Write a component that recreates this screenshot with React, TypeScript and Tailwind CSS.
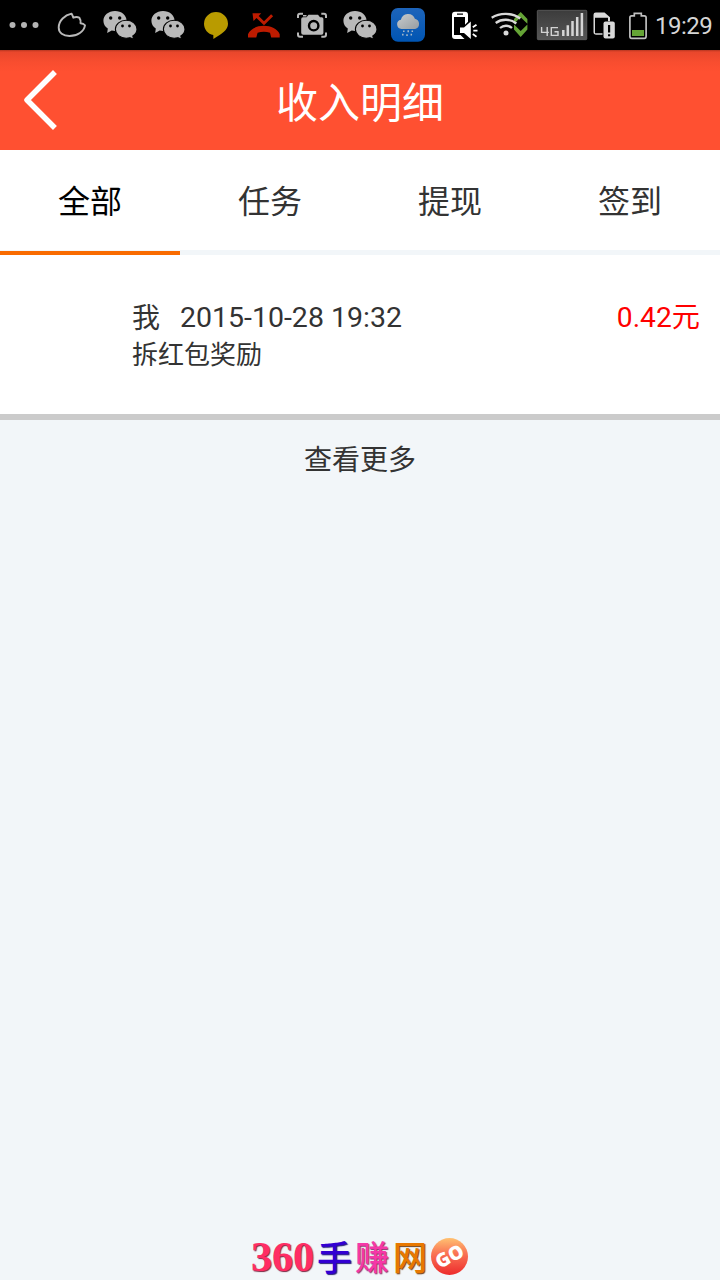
import type { ReactNode } from 'react';

const gray = '#b9b9b9';

function Slot({ children }: { children: ReactNode }) {
  return (
    <svg className="h-[50px] w-12 shrink-0" viewBox="0 0 48 50" fill="none">
      {children}
    </svg>
  );
}

function WeChat() {
  return (
    <Slot>
      <path d="M19 11c-6.5 0-11.6 4.3-11.6 9.8 0 3.2 1.6 6 4.4 7.8L11.2 33l4.5-2.5c1.1.3 2.2.4 3.3.4 6.4 0 11.6-4.5 11.6-10.1S25.4 11 19 11z" fill={gray} />
      <path d="M30.2 20.300c-6 0-10.800 4-10.800 9 0 5 4.800 8.900 10.800 8.900 1.300 0 2.400-.2 3.600-.5l3.800 1.500-.8-3.200c2.500-1.600 4.200-4 4.200-6.700 0-5-4.800-9-10.800-9z" fill={gray} stroke="#000" strokeWidth="1.100" />
      <circle cx="14.700" cy="18" r="1.700" fill="#000" />
      <circle cx="23.700" cy="18" r="1.700" fill="#000" />
      <circle cx="26.500" cy="26" r="1.400" fill="#000" />
      <circle cx="33.500" cy="26" r="1.400" fill="#000" />
    </Slot>
  );
}

function StatusBar() {
  return (
    <div className="flex h-[50px] w-full bg-black">
      <Slot>
        <g fill="#b4b4b4">
          <circle cx="12.500" cy="25" r="3" />
          <circle cx="24" cy="25" r="3" />
          <circle cx="35.500" cy="25" r="3" />
        </g>
      </Slot>
      <Slot>
        <path d="M23.500 13.600Q24.800 15.500 25.200 17.700Q28.500 16.500 31.300 17.600Q33 20 32.500 23.200Q35.500 23.300 37 25.300C36 31.500 29.500 36 21.500 36C15 36 10.700 32.800 10.700 27.600C10.600 20.500 17 15 23.500 13.600Z" stroke={gray} strokeWidth="1.900" strokeLinejoin="round" />
      </Slot>
      <WeChat />
      <WeChat />
      <Slot>
        <path d="M24 12a12 11.700 0 0 1 12 11.700c0 6.500-6 9.800-14.600 15.300l-.1-4C16 34 12 29.500 12 23.700A12 11.700 0 0 1 24 12z" fill="#b99b00" />
      </Slot>
      <Slot>
        <g fill="#bd1b00">
          <path d="M8 37.500v-3.200c2-5.300 8.500-8.500 15.700-8.500s14 3.200 16 8.500v3.200h-8.500l-1.200-4.700c-3.800-1.300-8.500-1.300-12.400 0l-1.300 4.700z" />
          <path d="M12.500 13.300h8.700l-2.500 2.600 5.300 5.300 7.100-7 2 2-9.100 9.100-7.500-7.400-3 3.200z" />
        </g>
      </Slot>
      <Slot>
        <path d="M10 18v-2.300q0-2 2-2H15M33.300 13.700h2.700q2 0 2 2V18M10 32.400V34.800q0 2 2 2H15M33.300 36.800h2.700q2 0 2-2v-2.400" stroke={gray} strokeWidth="2" />
        <path fill={gray} d="M15 17.300h3.500l2-2.600h9.500l2 2.600h1.700q1.700 0 1.700 1.700v13.800q0 1.900-1.900 1.900H15.200q-2 0-2-2V19.200q0-1.900 1.800-1.900zM15 14.900h3.500v1.500h-3.500z" />
        <circle cx="25.700" cy="25.700" r="4.700" fill={gray} stroke="#000" strokeWidth="2.400" />
      </Slot>
      <WeChat />
      <Slot>
        <defs>
          <linearGradient id="weather" x1="0" y1="0" x2="0" y2="1">
            <stop stopColor="#1d64ba" />
            <stop offset="1" stopColor="#0055b3" />
          </linearGradient>
          <linearGradient id="cloud" x1="0" y1="0" x2="1" y2="1">
            <stop stopColor="#c9cccd" />
            <stop offset="1" stopColor="#969da2" />
          </linearGradient>
        </defs>
        <rect x="7" y="8" width="34" height="33.700" rx="7" fill="url(#weather)" />
        <path d="M17.500 29a4.700 4.700 0 0 1-.6-9.300 7.300 7.300 0 0 1 14-1 5.300 5.300 0 0 1 .2 10.300z" fill="url(#cloud)" />
        <path d="M19.800 30.500v1.500M24.200 30.300v2M28.300 30.500v1.500M18.800 33.700v1.800M23 34.200v1.800M27.300 33.700v1.800" stroke="#a9bac9" strokeWidth="1.500" />
      </Slot>
      <svg className="h-[50px] w-[217px] shrink-0" viewBox="432 0 217 50" fill="none">
        <path fillRule="evenodd" fill="#fff" d="M455 11.700h10q3 0 3 3v7l-3 3V17h-11v18h6.500l4 4h-9.500q-3 0-3-3V14.700q0-3 3-3zM457 13.500v1.300h6V13.500z" />
        <path d="M460 27.500h4l6.800-6v17.500l-6.800-6h-4z" fill="#fff" />
        <path d="M472.800 27.300l3.700-2.600M473.300 30.700h4.200M472.800 34.100l3.700 2.600" stroke="#fff" strokeWidth="1.800" />

        <path d="M514 19l6.700-7 6.700 7v4.700l-6.700-6.400-6.700 6.400zM514 24.500l6.700 6.500 6.700-6.500v5l-6.700 7.500-6.700-7.500z" fill="#65a436" />
        <g stroke="#d9d9d9" strokeWidth="2.300">
          <path d="M491.700 17.700C500 12.500 512 12.500 520.300 18.500" />
          <path d="M495.700 23C501.500 18.600 510.500 18.600 516.300 23.500" />
          <path d="M500 28C503.500 25 508.500 25 512 28" />
        </g>
        <circle cx="506" cy="33" r="2.500" fill="#d9d9d9" />

        <defs>
          <linearGradient id="signal" x1="0" y1="0" x2="0" y2="1">
            <stop stopColor="#3c3c3c" />
            <stop offset="1" stopColor="#565656" />
          </linearGradient>
        </defs>
        <rect x="537.300" y="10.300" width="49.500" height="29.400" rx="1" fill="url(#signal)" stroke="#686868" strokeWidth=".7" />
        <path d="M541.600 27v5.400h7.200M547.200 27v9M558 27.600h-6.700v7.800h6.700v-3.700h-3.500" stroke="#d3d3d3" strokeWidth="1.400" />
        <path d="M563.300 30v6M567.800 25.300V36M572.500 21v15M577.200 17v19M581.900 13v23" stroke="#d5d5d5" strokeWidth="2.500" />

        <path d="M602.500 34.700h-6.300q-2.700 0-2.700-2.700V14.700q0-2.200 2.200-2.200h8.800l5.500 4.700v4h-2v-3.500H595v15.500h7.500z" fill="#d9d9d9" />
        <rect x="603.500" y="21.500" width="11.300" height="17" rx="2" fill="#d9d9d9" />
        <path d="M609.100 25v7.500M609.100 34.300v2" stroke="#000" strokeWidth="2.200" />

        <path d="M634.300 13.300h7v2.500h3q1.800 0 1.800 1.800v19q0 1.700-1.700 1.700h-12.800q-1.700 0-1.700-1.700v-19q0-1.800 1.700-1.800h2.700z" stroke="#bfbfbf" strokeWidth="1.700" />
        <rect x="632" y="30" width="12" height="6" fill="#65a436" />
      </svg>
      <div className="ml-[6px] flex h-[50px] items-center whitespace-nowrap pt-px font-['Roboto',sans-serif] text-[24px] leading-none tracking-[-0.5px] text-[#d6d6d6]">
        19:29
      </div>
    </div>
  );
}

const tabs = ['全部', '任务', '提现', '签到'];

export default function App() {
  return (
    <div className="flex h-[1280px] w-[720px] flex-col overflow-hidden bg-[#f2f6f9] font-['Roboto','Noto_Sans_CJK_SC',sans-serif] text-[#333]">
      <StatusBar />
      <header className="grid h-[100px] grid-cols-[80px_1fr_80px] items-center bg-[#ff5031] bg-[linear-gradient(#b63621_0px,#e9472c_2px,#f84d2f_12px,#ff5031_22px)] bg-no-repeat text-white">
        <svg className="h-[100px] w-20" viewBox="0 0 80 100" fill="none">
          <path d="M53 24L27 50L53 76" stroke="#fff" strokeWidth="5.500" strokeLinecap="square" strokeLinejoin="round" />
        </svg>
        <h1 className="h-[100px] text-center text-[42px] font-normal leading-[107px]">收入明细</h1>
      </header>
      <nav className="grid h-[105px] grid-cols-4 bg-white text-center text-[32px] leading-[104px]">
        {tabs.map((tab, i) => (
          <div key={tab} className="flex flex-col">
            <span className={i === 0 ? 'h-[100px] text-black' : 'h-[100px]'}>{tab}</span>
            <span className={i === 0 ? 'h-[5px] border-t border-[#f2f6f9] bg-[#f96b00]' : 'h-[5px] bg-[#f2f6f9]'} />
          </div>
        ))}
      </nav>
      <section className="flex h-[165px] justify-between border-b-[6px] border-[#cbcbcb] bg-white pl-[132px] pr-5 pt-11">
        <div>
          <div className="flex h-[37px] items-center gap-5 text-[28px] leading-none">
            <span className="pt-0.5">我</span>
            <span className="pt-px text-[28.500px]">2015-10-28 19:32</span>
          </div>
          <div className="h-9 text-[26px] leading-[39px]">拆红包奖励</div>
        </div>
        <div className="flex h-[37px] items-center pt-px text-[28.200px] leading-none text-[#f00]">0.42元</div>
      </section>
      <div className="text-center text-[28px] leading-[82px]">查看更多</div>
      <footer className="mt-auto flex h-12 items-center pl-[251px]">
        <span className="w-[66px] pt-px font-['Liberation_Serif',serif] text-[42px] font-bold leading-[48px] text-[#ff2d64] [text-shadow:1px_1px_1px_#7a2742]">360</span>
        <span className="w-[38px] font-['Noto_Sans_CJK_SC',sans-serif] text-[35px] font-medium leading-[48px] text-[#3200d2] [text-shadow:1px_1px_1px_#29217a]">手</span>
        <span className="w-[38px] font-['Noto_Sans_CJK_SC',sans-serif] text-[34px] font-medium leading-[48px] text-[#f538a8] [text-shadow:1px_1px_1px_#88336b]">赚</span>
        <span className="w-[38px] font-['Noto_Sans_CJK_SC',sans-serif] text-[34px] font-medium leading-[48px] text-[#e87800] [text-shadow:1px_1px_1px_#714118]">网</span>
        <div className="flex size-[37px] items-center justify-center rounded-full bg-[linear-gradient(#ffc171,#fa7656_40%,#ed2b2c)]">
          <span className="-rotate-[28deg] font-['Open_Sans',sans-serif] text-[19px] font-extrabold leading-none text-white">GO</span>
        </div>
      </footer>
    </div>
  );
}
